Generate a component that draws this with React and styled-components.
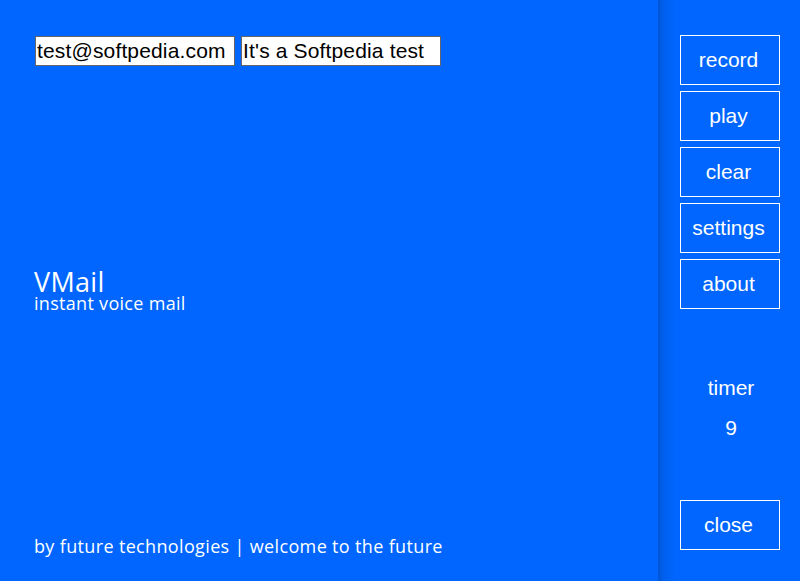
import React from "react";
import styled, { createGlobalStyle } from "styled-components";

const Global = createGlobalStyle`
  html, body { margin: 0; padding: 0; height: 100%; }
  body { background: #0066ff; overflow: hidden; }
  #root { height: 100%; }
`;

const Window = styled.div`
  display: flex;
  width: 800px;
  height: 581px;
  background: #0066ff;
`;

const Main = styled.div`
  flex: 1;
  display: flex;
  flex-direction: column;
  padding: 36px 0 0 35px;
`;

const Fields = styled.div`
  display: flex;
  gap: 6px;
`;

const Field = styled.input`
  box-sizing: border-box;
  width: 200px;
  height: 30px;
  border: 1px solid #666666;
  background: #ffffff;
  color: #000000;
  font-family: "Liberation Sans", Arial, sans-serif;
  font-size: 21px;
  letter-spacing: 0.15px;
  padding: 0 1px;
  outline: none;
`;

const Brand = styled.div`
  margin-top: 203px;
  color: #ffffff;
  font-family: "Open Sans", sans-serif;
`;

const Title = styled.div`
  font-size: 27px;
  line-height: 26px;
  letter-spacing: 0.3px;
  margin-left: -1px;
`;

const Subtitle = styled.div`
  font-size: 18px;
  line-height: 16px;
  letter-spacing: 0.3px;
  margin-left: -1px;
`;

const Footer = styled.div`
  margin-top: auto;
  margin-bottom: 24px;
  color: #ffffff;
  font-family: "Open Sans", sans-serif;
  font-size: 18px;
  line-height: 22px;
  letter-spacing: 0.35px;
  margin-left: -1px;
`;

const Side = styled.div`
  width: 142px;
  display: flex;
  flex-direction: column;
  align-items: flex-start;
  padding: 35px 0 31px 22px;
  box-sizing: border-box;
  background: linear-gradient(to right, #0054d4 0px, #0060f0 6px, #0066ff 18px);
`;

const Buttons = styled.div`
  display: flex;
  flex-direction: column;
  gap: 6px;
`;

const Button = styled.button`
  box-sizing: border-box;
  width: 100px;
  height: 50px;
  border: 1px solid #ffffff;
  background: transparent;
  color: #ffffff;
  font-family: "Liberation Sans", Arial, sans-serif;
  font-size: 21px;
  padding: 0 3px 0 0;
  cursor: pointer;
`;

const Timer = styled.div`
  width: 100px;
  margin-top: 67px;
  text-align: center;
  color: #ffffff;
  font-family: "Liberation Sans", Arial, sans-serif;
  font-size: 21px;
  padding-left: 1px;
`;

const TimerLabel = styled.div`
  line-height: 24px;
`;

const TimerValue = styled.div`
  line-height: 24px;
  margin-top: 16px;
`;

const CloseButton = styled(Button)`
  margin-top: auto;
`;

export default function App() {
  return (
    <Window>
      <Global />
      <Main>
        <Fields>
          <Field defaultValue="test@softpedia.com" />
          <Field defaultValue="It's a Softpedia test" />
        </Fields>
        <Brand>
          <Title>VMail</Title>
          <Subtitle>instant voice mail</Subtitle>
        </Brand>
        <Footer>by future technologies | welcome to the future</Footer>
      </Main>
      <Side>
        <Buttons>
          <Button>record</Button>
          <Button>play</Button>
          <Button>clear</Button>
          <Button>settings</Button>
          <Button>about</Button>
        </Buttons>
        <Timer>
          <TimerLabel>timer</TimerLabel>
          <TimerValue>9</TimerValue>
        </Timer>
        <CloseButton>close</CloseButton>
      </Side>
    </Window>
  );
}
